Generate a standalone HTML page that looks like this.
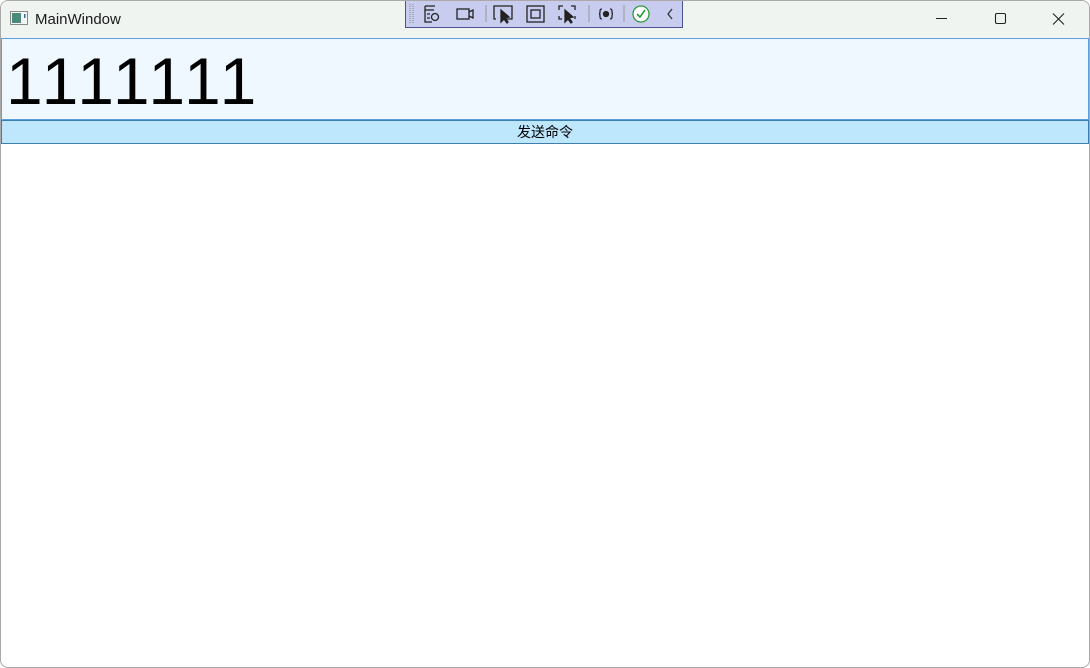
<!DOCTYPE html>
<html><head><meta charset="utf-8"><style>
*{margin:0;padding:0;box-sizing:border-box}
html,body{width:1090px;height:668px;overflow:hidden;background:#fff;font-family:"Liberation Sans","Noto Sans CJK SC",sans-serif}
.win{position:absolute;left:0;top:0;width:1090px;height:668px;border:1px solid #a9a9a9;border-radius:8px;overflow:hidden;background:#fff}
.title{position:absolute;left:0;top:0;width:100%;height:38px;background:#eff4f1}
.title .t{position:absolute;left:34px;top:10px;font-size:15px;color:#1a1a1a}
.tb{position:absolute;left:404px;top:-1px;width:278px;height:28px;background:#c8cdf0;border:1px solid #4a5290;border-top:none}
.txt{position:absolute;left:0;top:37px;width:1088px;height:82px;background:#eff7ff;border:1px solid #5a9fe0}
.txt span{position:absolute;left:4px;top:4px;font-size:66px;line-height:76px;color:#000;letter-spacing:3.8px}
.btn{position:absolute;left:0;top:119px;width:1088px;height:24px;background:#bee6fd;border:1px solid #3c7fb1;text-align:center;font-size:14px;line-height:22px;color:#000}
</style></head><body>
<div class="win">
<div class="title">
<svg style="position:absolute;left:9px;top:10px" width="18" height="15"><rect x="0.5" y="0.5" width="17" height="13" fill="#f4f4f4" stroke="#888"/><rect x="2" y="2" width="9" height="10" fill="#4a8a7a"/><rect x="14" y="3" width="1.5" height="4" fill="#3a6aa0"/></svg>
<div class="t">MainWindow</div>
<svg style="position:absolute;left:934px;top:11px" width="140" height="14" fill="none" stroke="#222" stroke-width="1.1">
<line x1="1" y1="6.5" x2="12" y2="6.5"/>
<rect x="60.5" y="1.5" width="10" height="10" rx="1.5"/>
<path d="M118 1.5l11 11M129 1.5l-11 11"/>
</svg>
</div>
<div class="tb">
<svg width="278" height="27" fill="none" stroke="#222" stroke-width="1.3">
<g stroke="#888" stroke-width="1" stroke-dasharray="1 1"><line x1="4" y1="4" x2="4" y2="24"/><line x1="7" y1="4" x2="7" y2="24"/></g>
<path d="M19 6h10M19 6v16h7M19 10h9M21 14h3M21 18h3"/><circle cx="29" cy="17" r="3.5"/>
<rect x="51" y="9" width="12" height="10"/><path d="M63 12l4-2v8l-4-2"/>
<line x1="80" y1="5" x2="80" y2="22" stroke="#999" stroke-width="1"/>
<path d="M90 19h-2V6h18v13h-6"/><path d="M95 10l0 12 3-3 3 4 1-1-3-4 4-1z" fill="#222"/>
<rect x="121" y="6" width="17" height="16"/><rect x="125" y="10" width="9" height="8"/>
<path d="M153 10V6h4M165 6h4v4M153 16v3h3M169 16v3" /><path d="M159 10l0 12 3-3 3 4 1-1-3-4 4-1z" fill="#222"/>
<line x1="183" y1="5" x2="183" y2="22" stroke="#999" stroke-width="1"/>
<path d="M196 9c-2 0-2 1-2 3s-1 2-1 2 1 0 1 2 0 3 2 3M204 9c2 0 2 1 2 3s1 2 1 2-1 0-1 2 0 3-2 3"/><circle cx="200" cy="14" r="2.5" fill="#222"/>
<line x1="218" y1="5" x2="218" y2="22" stroke="#999" stroke-width="1"/>
<circle cx="235" cy="14" r="8" stroke="#2a9a3a" fill="#fff"/><path d="M231 14l3 3 5-7" stroke="#2a9a3a" stroke-width="1.6"/>
<path d="M266 9l-4 5 4 5" stroke="#333"/>
</svg>
</div>
<div class="txt"><span>1111111</span></div>
<div class="btn">发送命令</div>
</div>
</body></html>
